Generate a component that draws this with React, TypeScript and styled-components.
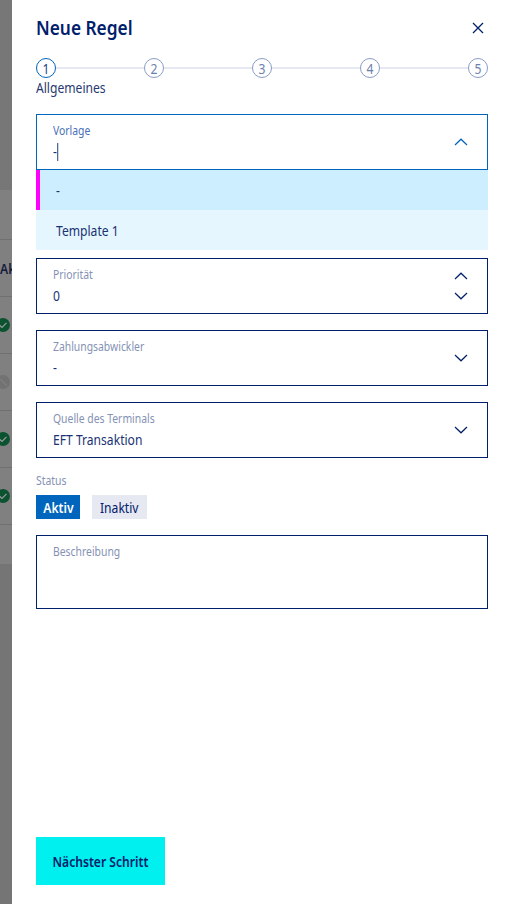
import React from 'react';
import styled, { createGlobalStyle, css } from 'styled-components';

const GlobalStyle = createGlobalStyle`
  html, body {
    margin: 0;
    padding: 0;
    height: 100%;
    background: #fff;
    overflow: hidden;
  }
  * { box-sizing: border-box; }
`;

const NAVY = '#00206b';
const BLUE = '#0065bd';
const FONT = `'Noto Sans', 'Open Sans', sans-serif`;

// the design font is a narrower cut than anything installed
const narrowLeft = css`
  transform: scaleX(0.865);
  transform-origin: left center;
  white-space: nowrap;
`;

const narrowCenter = css`
  display: inline-block;
  transform: scaleX(0.865);
  transform-origin: center;
  white-space: nowrap;
`;

const ChevronUp = () => (
  <svg width="14" height="8" viewBox="0 0 14 8" fill="none">
    <path d="M1 7L7 1.2L13 7" stroke="currentColor" strokeWidth="1.2" />
  </svg>
);

const ChevronDown = () => (
  <svg width="14" height="8" viewBox="0 0 14 8" fill="none">
    <path d="M1 1L7 6.8L13 1" stroke="currentColor" strokeWidth="1.2" />
  </svg>
);

const CloseIcon = () => (
  <svg width="12" height="12" viewBox="0 0 12 12" fill="none">
    <path d="M1 1L11 11M11 1L1 11" stroke="currentColor" strokeWidth="1.3" />
  </svg>
);

const CheckBadge = () => (
  <svg width="14" height="14" viewBox="0 0 14 14">
    <circle cx="7" cy="7" r="7" fill="#0b5230" />
    <path d="M3.5 7.2L6 9.5L10.5 4.8" fill="none" stroke="#9a9a9a" strokeWidth="1.2" />
  </svg>
);

const BlockedBadge = () => (
  <svg width="14" height="14" viewBox="0 0 14 14">
    <circle cx="7" cy="7" r="7" fill="#727272" />
    <path d="M3 3L11 11" fill="none" stroke="#808080" strokeWidth="1.2" />
  </svg>
);

const steps = [1, 2, 3, 4, 5];

const App: React.FC = () => {
  return (
    <Page>
      <GlobalStyle />
      <Backdrop>
        <BackdropTop />
        <BackdropHeader />
        <BackdropRow><AktLabel>Akt</AktLabel></BackdropRow>
        <BackdropRow><CheckBadge /></BackdropRow>
        <BackdropRow><BlockedBadge /></BackdropRow>
        <BackdropRow><CheckBadge /></BackdropRow>
        <BackdropRow><CheckBadge /></BackdropRow>
        <BackdropBottom />
      </Backdrop>

      <Panel>
        <Header>
          <Title>Neue Regel</Title>
          <CloseButton aria-label="Schließen"><CloseIcon /></CloseButton>
        </Header>

        <Stepper>
          {steps.map((step) => (
            <StepCircle key={step} $active={step === 1}>
              <StepNumber>{step}</StepNumber>
            </StepCircle>
          ))}
        </Stepper>
        <StepLabel>Allgemeines</StepLabel>

        <Field $focused>
          <FieldText>
            <FieldLabel $focused>Vorlage</FieldLabel>
            <FieldValue>-<Caret /></FieldValue>
          </FieldText>
          <Arrows $focused><ChevronUp /></Arrows>
        </Field>
        <Options>
          <Option $selected><OptionText>-</OptionText></Option>
          <Option><OptionText>Template 1</OptionText></Option>
        </Options>

        <Field $spaced="8px">
          <FieldText>
            <FieldLabel>Priorität</FieldLabel>
            <FieldValue>0</FieldValue>
          </FieldText>
          <Arrows $stacked><ChevronUp /><ChevronDown /></Arrows>
        </Field>

        <Field $spaced="16px">
          <FieldText>
            <FieldLabel>Zahlungsabwickler</FieldLabel>
            <FieldValue>-</FieldValue>
          </FieldText>
          <Arrows><ChevronDown /></Arrows>
        </Field>

        <Field $spaced="16px">
          <FieldText>
            <FieldLabel>Quelle des Terminals</FieldLabel>
            <FieldValue>EFT Transaktion</FieldValue>
          </FieldText>
          <Arrows><ChevronDown /></Arrows>
        </Field>

        <StatusLabel>Status</StatusLabel>
        <StatusRow>
          <StatusChip $active $width="44px"><ChipText>Aktiv</ChipText></StatusChip>
          <StatusChip $width="55px"><ChipText>Inaktiv</ChipText></StatusChip>
        </StatusRow>

        <TextArea>
          <FieldLabel>Beschreibung</FieldLabel>
        </TextArea>

        <Footer>
          <NextButton><ButtonLabel>Nächster Schritt</ButtonLabel></NextButton>
        </Footer>
      </Panel>
    </Page>
  );
};

export default App;

// ===== Styles =====

const Page = styled.div`
  display: flex;
  width: 507px;
  height: 904px;
  overflow: hidden;
  font-family: ${FONT};
  color: ${NAVY};
`;

const Backdrop = styled.div`
  display: flex;
  flex-direction: column;
  flex: 0 0 12px;
  overflow: hidden;
  background: #757575;
`;

const BackdropTop = styled.div`
  flex: 0 0 190px;
  background: #777777;
`;

const BackdropHeader = styled.div`
  flex: 0 0 49px;
  background: #808080;
`;

const BackdropRow = styled.div`
  flex: 0 0 57px;
  display: flex;
  align-items: center;
  margin-left: -4px;
  width: 16px;
  background: #808080;
  border-top: 1px solid #707070;
`;

const BackdropBottom = styled.div`
  flex: 0 0 40px;
  background: #808080;
  border-top: 1px solid #707070;
`;

const AktLabel = styled.span`
  margin-left: 4px;
  font-size: 14px;
  font-weight: 600;
  color: #141d3c;
  ${narrowLeft}
`;

const Panel = styled.div`
  flex: 1;
  display: flex;
  flex-direction: column;
  min-width: 0;
  padding: 16px 19px 19px 24px;
  background: #fff;
`;

const Header = styled.div`
  display: flex;
  align-items: center;
  justify-content: space-between;
  height: 24px;
`;

const Title = styled.h1`
  margin: 0;
  font-size: 20px;
  line-height: 24px;
  font-weight: 600;
  color: ${NAVY};
  ${narrowLeft}
`;

const CloseButton = styled.button`
  display: flex;
  padding: 0;
  margin-right: 4px;
  border: 0;
  background: none;
  color: ${NAVY};
`;

const Stepper = styled.div`
  display: flex;
  justify-content: space-between;
  margin-top: 18px;
  background: linear-gradient(#e6e9f3, #e6e9f3) center / 100% 2px no-repeat;
`;

const StepCircle = styled.div<{ $active?: boolean }>`
  display: flex;
  align-items: center;
  justify-content: center;
  width: 20px;
  height: 20px;
  border-radius: 50%;
  background: #fff;
  border: 1px solid ${(p) => (p.$active ? BLUE : '#8a9cc5')};
  color: ${(p) => (p.$active ? '#23468f' : '#6c80ad')};
  font-size: 14px;
`;

const StepNumber = styled.span`
  ${narrowCenter}
`;

const StepLabel = styled.div`
  margin-top: 0;
  font-size: 14px;
  line-height: 20px;
  color: #26386f;
  ${narrowLeft}
`;

const Field = styled.div<{ $focused?: boolean; $spaced?: string }>`
  display: flex;
  align-items: center;
  justify-content: space-between;
  flex: 0 0 56px;
  margin-top: ${(p) => p.$spaced ?? '16px'};
  padding: 1px 19px 0 16px;
  border: 1px solid ${(p) => (p.$focused ? BLUE : NAVY)};
`;

const FieldText = styled.div`
  display: flex;
  flex-direction: column;
`;

const FieldLabel = styled.div<{ $focused?: boolean }>`
  font-size: 12px;
  line-height: 16px;
  color: ${(p) => (p.$focused ? '#4a72b8' : '#8592b5')};
  ${narrowLeft}
`;

const FieldValue = styled.div`
  display: flex;
  align-items: center;
  height: 22px;
  margin-top: 2px;
  font-size: 14px;
  line-height: 20px;
  color: #1a3273;
  ${narrowLeft}
`;

const Caret = styled.span`
  width: 1px;
  height: 18px;
  background: ${NAVY};
`;

const Arrows = styled.div<{ $stacked?: boolean; $focused?: boolean }>`
  display: flex;
  flex-direction: column;
  margin-top: -1px;
  gap: ${(p) => (p.$stacked ? '12px' : '0')};
  color: ${(p) => (p.$focused ? BLUE : NAVY)};

  svg { display: block; }
`;

const Options = styled.div`
  display: flex;
  flex-direction: column;
`;

const Option = styled.div<{ $selected?: boolean }>`
  display: flex;
  align-items: center;
  height: 40px;
  padding-left: ${(p) => (p.$selected ? '16px' : '20px')};
  background: ${(p) => (p.$selected ? '#cdeeff' : '#e5f6fe')};
  border-left: ${(p) => (p.$selected ? '4px solid #ff00ff' : '0')};
  font-size: 14px;
  color: #1a3273;
`;

const OptionText = styled.span`
  ${narrowLeft}
`;

const StatusLabel = styled.div`
  margin-top: 15px;
  font-size: 12px;
  line-height: 16px;
  color: #8592b5;
  ${narrowLeft}
`;

const StatusRow = styled.div`
  display: flex;
  gap: 12px;
  margin-top: 6px;
`;

const StatusChip = styled.div<{ $active?: boolean; $width: string }>`
  display: flex;
  align-items: center;
  justify-content: center;
  width: ${(p) => p.$width};
  height: 24px;
  background: ${(p) => (p.$active ? BLUE : '#e6e8f2')};
  color: ${(p) => (p.$active ? '#fff' : NAVY)};
  font-size: 14px;
  font-weight: ${(p) => (p.$active ? 600 : 400)};
`;

const ChipText = styled.span`
  ${narrowCenter}
`;

const TextArea = styled.div`
  flex: 0 0 74px;
  margin-top: 16px;
  padding: 8px 16px;
  border: 1px solid ${NAVY};
`;

const Footer = styled.div`
  margin-top: auto;
`;

const NextButton = styled.button`
  display: block;
  width: 129px;
  height: 48px;
  padding: 0;
  border: 0;
  background: #00f0f0;
  color: ${NAVY};
  font-family: ${FONT};
  font-size: 14px;
  font-weight: 600;
`;

const ButtonLabel = styled.span`
  ${narrowCenter}
`;
